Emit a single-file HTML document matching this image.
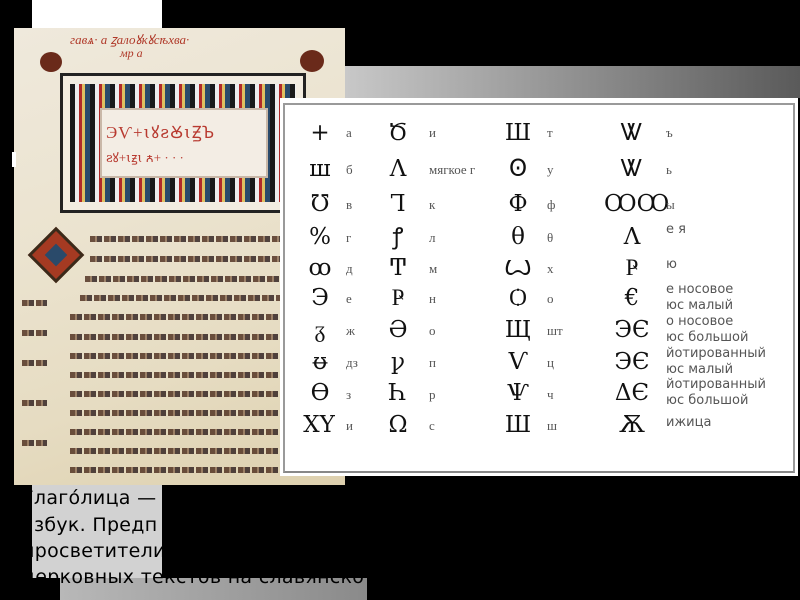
<!DOCTYPE html>
<html><head><meta charset="utf-8"><style>
*{margin:0;padding:0;box-sizing:border-box}
body{width:800px;height:600px;background:#000;position:relative;overflow:hidden;font-family:"Liberation Serif","DejaVu Serif",serif}
.a{position:absolute}
.ms{left:14px;top:28px;width:331px;height:457px;background:linear-gradient(160deg,#efe9dc 0%,#ebe3cf 40%,#e6dcc2 70%,#ddd0ae 100%)}
.line{position:absolute;height:6px;background:repeating-linear-gradient(90deg,#4a2a1a 0 5px,#8a6a50 5px 7px,#2a1a1a 7px 12px,transparent 12px 14px);opacity:.8}
.g{position:absolute;font-size:23px;color:#111;font-family:"DejaVu Serif",serif;text-align:center;width:40px;line-height:30px}
.l{position:absolute;font-size:13px;color:#555;line-height:16px}
.r{position:absolute;font-family:"DejaVu Sans","Liberation Sans",sans-serif;font-size:13px;color:#555;line-height:16px}
.bt{font-family:"DejaVu Sans","Liberation Sans",sans-serif;font-size:19px;color:#000;position:absolute;left:22px;white-space:nowrap;letter-spacing:0.3px}
</style></head><body>
<div class="a" style="left:32px;top:0;width:130px;height:28px;background:#fff"></div>
<div class="a ms"></div>
<div class="a" style="left:12px;top:152px;width:4px;height:15px;background:#fff"></div>
<div class="a" style="left:70px;top:30px;font-size:13px;color:#b03a2a;font-style:italic">гавѧ· а  ꙁалоꙋкꙋсѣхва·</div>
<div class="a" style="left:120px;top:46px;font-size:12px;color:#b03a2a;font-style:italic">мр  а</div>
<div class="a" style="left:40px;top:52px;width:22px;height:20px;border-radius:50%;background:#6a2a1a"></div>
<div class="a" style="left:300px;top:50px;width:24px;height:22px;border-radius:50%;background:#6a2a1a"></div>
<div class="a" style="left:60px;top:73px;width:246px;height:140px;border:3px solid #222;background:#f2ece0"></div>
<div class="a" style="left:70px;top:84px;width:226px;height:118px;background:repeating-linear-gradient(90deg,#1a1a1a 0 5px,#eee 5px 9px,#b02a2a 9px 12px,#e0c060 12px 15px,#2a4a6a 15px 20px)"></div>
<div class="a" style="left:100px;top:108px;width:168px;height:70px;background:#f3ede4;border:2px solid #c9b8a8"></div>
<div class="a" style="left:106px;top:120px;font-size:17px;color:#b83a30;letter-spacing:1px">ЭѴ+ꙇꙋꙅꙊꙇꙂꙎ</div>
<div class="a" style="left:106px;top:148px;font-size:13px;color:#b83a30">ꙅꙋ+ꙇꙃꙇ ꙉ+ · · ·</div>
<div class="a" style="left:36px;top:235px;width:40px;height:40px;background:#a53a22;transform:rotate(45deg);border:3px solid #3a2a1a"></div>
<div class="a" style="left:48px;top:247px;width:16px;height:16px;background:#2a4a6a;transform:rotate(45deg)"></div>
<div class="line" style="left:90px;top:236px;width:195px"></div>
<div class="line" style="left:90px;top:256px;width:255px"></div>
<div class="line" style="left:85px;top:276px;width:260px"></div>
<div class="line" style="left:80px;top:295px;width:265px"></div>
<div class="line" style="left:70px;top:314px;width:275px"></div>
<div class="line" style="left:70px;top:334px;width:275px"></div>
<div class="line" style="left:70px;top:353px;width:275px"></div>
<div class="line" style="left:70px;top:372px;width:275px"></div>
<div class="line" style="left:70px;top:391px;width:275px"></div>
<div class="line" style="left:70px;top:410px;width:275px"></div>
<div class="line" style="left:70px;top:429px;width:275px"></div>
<div class="line" style="left:70px;top:448px;width:275px"></div>
<div class="line" style="left:70px;top:467px;width:275px"></div>
<div class="line" style="left:22px;top:300px;width:25px"></div>
<div class="line" style="left:22px;top:330px;width:25px"></div>
<div class="line" style="left:22px;top:360px;width:25px"></div>
<div class="line" style="left:22px;top:400px;width:25px"></div>
<div class="line" style="left:22px;top:440px;width:25px"></div>
<div class="a" style="left:345px;top:66px;width:455px;height:32px;background:linear-gradient(90deg,#c8c8c8,#5a5a5a)"></div>
<div class="a" style="left:280px;top:98px;width:518px;height:378px;background:#fff"></div>
<div class="a" style="left:283px;top:103px;width:512px;height:370px;border:2px solid #9a9a9a;border-bottom-color:#888"></div>

<div class="g" style="left:300px;top:118px">+</div><div class="l" style="left:346px;top:125px">а</div>
<div class="g" style="left:300px;top:154px">ш</div><div class="l" style="left:346px;top:162px">б</div>
<div class="g" style="left:300px;top:189px">℧</div><div class="l" style="left:346px;top:197px">в</div>
<div class="g" style="left:300px;top:222px">%</div><div class="l" style="left:346px;top:230px">г</div>
<div class="g" style="left:300px;top:253px">ꝏ</div><div class="l" style="left:346px;top:261px">д</div>
<div class="g" style="left:300px;top:283px">Э</div><div class="l" style="left:346px;top:291px">е</div>
<div class="g" style="left:300px;top:315px">ᵹ</div><div class="l" style="left:346px;top:323px">ж</div>
<div class="g" style="left:300px;top:347px">ᵿ</div><div class="l" style="left:346px;top:355px">дз</div>
<div class="g" style="left:300px;top:378px">Ѳ</div><div class="l" style="left:346px;top:387px">з</div>
<div class="g" style="left:294px;top:410px;width:50px">ΧΥ</div><div class="l" style="left:346px;top:418px">и</div>

<div class="g" style="left:378px;top:118px">Ծ</div><div class="l" style="left:429px;top:125px">и</div>
<div class="g" style="left:378px;top:154px">Λ</div><div class="l" style="left:429px;top:162px">мягкое г</div>
<div class="g" style="left:378px;top:189px">Ꞁ</div><div class="l" style="left:429px;top:197px">к</div>
<div class="g" style="left:378px;top:222px">ꝭ</div><div class="l" style="left:429px;top:230px">л</div>
<div class="g" style="left:378px;top:253px">Ͳ</div><div class="l" style="left:429px;top:261px">м</div>
<div class="g" style="left:378px;top:283px">Ҏ</div><div class="l" style="left:429px;top:291px">н</div>
<div class="g" style="left:378px;top:315px">Ә</div><div class="l" style="left:429px;top:323px">о</div>
<div class="g" style="left:378px;top:347px">ꝩ</div><div class="l" style="left:429px;top:355px">п</div>
<div class="g" style="left:378px;top:378px">Һ</div><div class="l" style="left:429px;top:387px">р</div>
<div class="g" style="left:378px;top:410px">Ω</div><div class="l" style="left:429px;top:418px">с</div>

<div class="g" style="left:498px;top:118px">Ш</div><div class="l" style="left:547px;top:125px">т</div>
<div class="g" style="left:498px;top:154px">Ꙩ</div><div class="l" style="left:547px;top:162px">у</div>
<div class="g" style="left:498px;top:189px">Ф</div><div class="l" style="left:547px;top:197px">ф</div>
<div class="g" style="left:498px;top:222px">θ</div><div class="l" style="left:547px;top:230px">θ</div>
<div class="g" style="left:498px;top:253px">Ꙍ</div><div class="l" style="left:547px;top:261px">х</div>
<div class="g" style="left:498px;top:283px">Ѻ</div><div class="l" style="left:547px;top:291px">о</div>
<div class="g" style="left:498px;top:315px">Щ</div><div class="l" style="left:547px;top:323px">шт</div>
<div class="g" style="left:498px;top:347px">Ѵ</div><div class="l" style="left:547px;top:355px">ц</div>
<div class="g" style="left:498px;top:378px">Ѱ</div><div class="l" style="left:547px;top:387px">ч</div>
<div class="g" style="left:498px;top:410px">Ш</div><div class="l" style="left:547px;top:418px">ш</div>

<div class="g" style="left:612px;top:118px">Ꮤ</div><div class="l" style="left:666px;top:125px">ъ</div>
<div class="g" style="left:612px;top:154px">Ꮤ</div><div class="l" style="left:666px;top:162px">ь</div>
<div class="g" style="left:604px;top:189px;width:56px">ꝎꝎ</div><div class="l" style="left:666px;top:197px">ы</div>
<div class="g" style="left:612px;top:222px">Λ</div><div class="r" style="left:666px;top:222px">е я</div>
<div class="g" style="left:612px;top:253px">Ҏ</div><div class="r" style="left:666px;top:257px">ю</div>
<div class="g" style="left:612px;top:283px">€</div><div class="r" style="left:666px;top:282px">е носовое<br>юс малый</div>
<div class="g" style="left:612px;top:315px">ЭЄ</div><div class="r" style="left:666px;top:314px">о носовое<br>юс большой</div>
<div class="g" style="left:612px;top:347px">ЭЄ</div><div class="r" style="left:666px;top:346px">йотированный<br>юс малый</div>
<div class="g" style="left:612px;top:378px">ΔЄ</div><div class="r" style="left:666px;top:377px">йотированный<br>юс большой</div>
<div class="g" style="left:612px;top:410px">Ѫ</div><div class="r" style="left:666px;top:415px">ижица</div>

<div class="a" style="left:32px;top:485px;width:130px;height:93px;background:#d2d2d2"></div>
<div class="a" style="left:60px;top:578px;width:307px;height:22px;background:linear-gradient(90deg,#b8b8b8,#8a8a8a)"></div>
<div class="bt" style="top:487px">Глаго́лица — </div>
<div class="bt" style="top:514px">азбук. Предп</div>
<div class="bt" style="top:540px">просветители</div>
<div class="bt" style="top:566px">церковных текстов на славянско</div>
</body></html>
